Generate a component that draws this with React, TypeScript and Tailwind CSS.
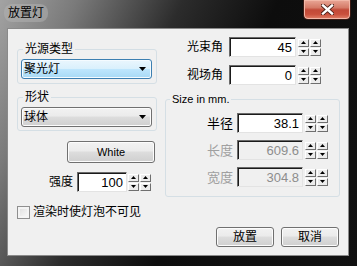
import React from 'react';

const winBtn =
  'border border-[#707070] rounded-[3px] bg-[linear-gradient(#f2f2f2_0%,#ebebeb_45%,#dddddd_50%,#cfcfcf_100%)] shadow-[inset_0_0_0_1px_#fcfcfc] flex items-center justify-center';

const SpinBtn: React.FC<{ up?: boolean }> = ({ up }) => (
  <div className="w-[11px] h-[8px] bg-[#ececec] border border-t-[#ffffff] border-l-[#ffffff] border-b-[#6f6f6f] border-r-[#6f6f6f] flex items-center justify-center">
    <svg width="5" height="3" viewBox="0 0 5 3">
      {up ? <path d="M0 3 L2.5 0 L5 3 Z" fill="#000" /> : <path d="M0 0 L5 0 L2.5 3 Z" fill="#000" />}
    </svg>
  </div>
);

const Spinner: React.FC = () => (
  <div className="flex gap-[1px]">
    {[0, 1].map((i) => (
      <div key={i} className="flex flex-col gap-[1px]">
        <SpinBtn up />
        <SpinBtn />
      </div>
    ))}
  </div>
);

const NumField: React.FC<{ value: string; w: string; disabled?: boolean }> = ({ value, w, disabled }) => (
  <div
    className={`${w} h-[20px] border border-t-[#6a6a6a] border-l-[#6a6a6a] border-b-[#e3e3e3] border-r-[#e3e3e3] shadow-[inset_1px_1px_0_#1a1a1a] flex items-center justify-end pr-[3px] text-[13px] leading-none ${
      disabled ? 'bg-[#f0f0f0] text-[#8d8d8d]' : 'bg-white text-black'
    }`}
  >
    {value}
  </div>
);

const Arrow: React.FC = () => (
  <svg width="7" height="4" viewBox="0 0 7 4">
    <path d="M0 0 L7 0 L3.5 4 Z" fill="#000" />
  </svg>
);

const App: React.FC = () => {
  return (
    <div className="w-[357px] h-[266px] flex flex-col overflow-hidden text-black font-['Liberation_Sans','Noto_Sans_CJK_SC',sans-serif] bg-[linear-gradient(115deg,#a3a3a3_0%,#7a7a7a_16%,#2c2c2c_38%,#0d0d0d_58%,#111111_100%)]">
      {/* Title bar */}
      <div className="h-[28px] shrink-0 flex items-start">
        <div className="ml-[4px] mt-[4px] px-[4px] py-[2px] rounded-[8px] bg-[#b4b4b4]/50">
          <span className="block text-[12px] leading-[14px] text-black">放置灯</span>
        </div>
        <div className="ml-auto mr-[6px] w-[48px] h-[20px] rounded-b-[5px] border border-t-0 border-[#3a1a14] bg-[linear-gradient(#e9a797_0%,#d57b68_40%,#c24a38_52%,#c9503c_75%,#e2826a_100%)] shadow-[inset_0_0_0_1px_#f2b8a8] flex items-center justify-center">
          <svg width="13" height="11" viewBox="0 0 13 11">
            <path d="M2 1.5 L11 9.5 M11 1.5 L2 9.5" stroke="#4a1e16" strokeWidth="4.2" strokeLinecap="square" />
            <path d="M2 1.5 L11 9.5 M11 1.5 L2 9.5" stroke="#ffffff" strokeWidth="2.4" strokeLinecap="square" />
          </svg>
        </div>
      </div>

      {/* Client area */}
      <div className="flex-1 ml-[7px] mr-[8px] mb-[10px] border border-[#8a8a8a] bg-[#f0f0f0] flex flex-col text-[12px] text-black">
        <div className="flex pl-[9px] gap-[8px]">
          {/* Left column */}
          <div className="w-[140px] flex flex-col">
            <fieldset className="mt-[13px] border border-[#d5dfe5] rounded-[3px] pl-[3px] pr-[4px] pt-[3px] pb-[4px]">
              <legend className="ml-[2px] px-[2px] text-[12px] leading-[14px]">光源类型</legend>
              <div className="h-[20px] rounded-[3px] border border-[#3c7fb1] bg-[linear-gradient(#eaf6fd_0%,#d9f0fc_50%,#bee6fd_51%,#a7d9f5_100%)] shadow-[inset_0_0_0_1px_#f4fbff] flex items-center pl-[2px] pr-[5px]">
                <span className="leading-none">聚光灯</span>
                <span className="ml-auto flex"><Arrow /></span>
              </div>
            </fieldset>
            <fieldset className="mt-[6px] border border-[#d5dfe5] rounded-[3px] pl-[3px] pr-[4px] pt-[3px] pb-[3px]">
              <legend className="ml-[2px] px-[2px] text-[12px] leading-[14px]">形状</legend>
              <div className={`h-[20px] ${winBtn} justify-start pl-[2px] pr-[5px]`}>
                <span className="leading-none">球体</span>
                <span className="ml-auto flex"><Arrow /></span>
              </div>
            </fieldset>
            <div className={`mt-[10px] ml-[50px] w-[88px] h-[22px] ${winBtn} text-[11px]`}>White</div>
            <div className="mt-[9px] flex items-center">
              <span className="w-[56px] text-right leading-none">强度</span>
              <div className="ml-[4px]"><NumField value="100" w="w-[50px]" /></div>
              <div className="ml-[1px]"><Spinner /></div>
            </div>
          </div>

          {/* Right column */}
          <div className="w-[175px] flex flex-col">
            <div className="mt-[8px] flex items-center">
              <span className="w-[58px] text-right leading-none">光束角</span>
              <div className="ml-[6px]"><NumField value="45" w="w-[67px]" /></div>
              <div className="ml-[2px]"><Spinner /></div>
            </div>
            <div className="mt-[8px] flex items-center">
              <span className="w-[58px] text-right leading-none">视场角</span>
              <div className="ml-[6px]"><NumField value="0" w="w-[67px]" /></div>
              <div className="ml-[2px]"><Spinner /></div>
            </div>
            <fieldset className="mt-[7px] border border-[#d5dfe5] rounded-[3px] pt-[7px] pb-[9px] flex flex-col gap-[7px]">
              <legend className="ml-[4px] px-[2px] text-[11px] leading-[14px]">Size in mm.</legend>
              <div className="flex items-center">
                <span className="w-[67px] text-right text-[13px] leading-none">半径</span>
                <div className="ml-[4px]"><NumField value="38.1" w="w-[66px]" /></div>
                <div className="ml-[2px]"><Spinner /></div>
              </div>
              <div className="flex items-center">
                <span className="w-[67px] text-right text-[13px] leading-none text-[#a0a0a0]">长度</span>
                <div className="ml-[4px]"><NumField value="609.6" w="w-[66px]" disabled /></div>
                <div className="ml-[2px]"><Spinner /></div>
              </div>
              <div className="flex items-center">
                <span className="w-[67px] text-right text-[13px] leading-none text-[#a0a0a0]">宽度</span>
                <div className="ml-[4px]"><NumField value="304.8" w="w-[66px]" disabled /></div>
                <div className="ml-[2px]"><Spinner /></div>
              </div>
            </fieldset>
          </div>
        </div>

        {/* Checkbox */}
        <div className="mt-[9px] pl-[9px] flex items-center gap-[3px]">
          <div className="w-[13px] h-[13px] border border-[#8f8f8f] bg-[linear-gradient(135deg,#dcdcdc,#fbfbfb)] shadow-[inset_0_0_0_2px_#f4f4f4]" />
          <span className="leading-[13px]">渲染时使灯泡不可见</span>
        </div>

        {/* Buttons */}
        <div className="mt-[8px] pr-[9px] flex justify-end gap-[7px]">
          <div className={`w-[58px] h-[20px] ${winBtn}`}>放置</div>
          <div className={`w-[58px] h-[20px] ${winBtn}`}>取消</div>
        </div>
      </div>
    </div>
  );
};

export default App;
